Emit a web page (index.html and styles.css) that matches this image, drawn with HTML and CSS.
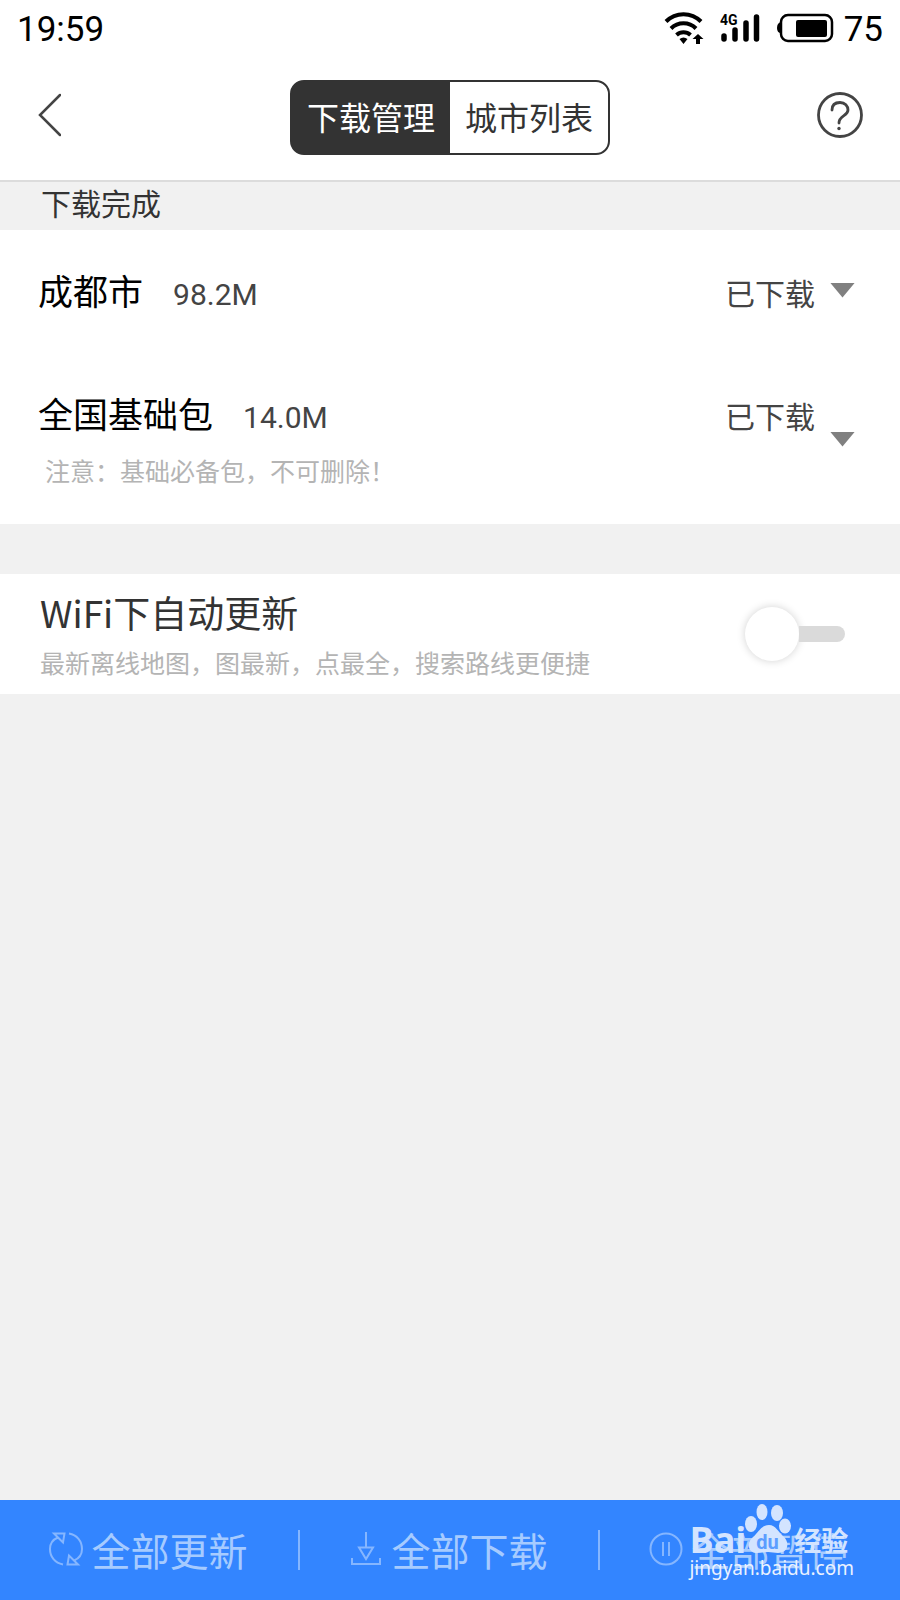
FILE: index.html
```html
<!DOCTYPE html>
<html lang="zh-CN">
<head>
<meta charset="utf-8">
<meta name="viewport" content="width=device-width, initial-scale=1">
<title>下载管理</title>
<link rel="stylesheet" href="styles.css">
</head>
<body>
<div class="screen">
  <div class="status">
    <span class="status-text">19:59</span>
    <div class="status-icons">
      <svg class="wifi" viewBox="0 0 40 34" width="40" height="34" aria-hidden="true">
        <g fill="none" stroke="#000" stroke-width="4">
          <path d="M2 10.500A24.500 24.500 0 0 1 37 10.500"/>
          <path d="M7 17.500A17.500 17.500 0 0 1 32 17.500"/>
          <path d="M12.500 24A10.500 10.500 0 0 1 26.500 24"/>
        </g>
        <path d="M15.500 28Q19.500 25 23.500 28L19.500 33ZM34 23L39.500 28H36V33H32V28H28.500Z"/>
      </svg>
      <svg class="signal" viewBox="0 0 40 32" width="40" height="32" aria-hidden="true">
        <g stroke="#000" stroke-width="5.500" stroke-linecap="round">
          <path d="M4 24V27M15 18V27M26 11V27M36.500 5V27"/>
        </g>
        <text x="0" y="13" class="net">4G</text>
      </svg>
      <svg class="battery" viewBox="0 0 58 30" width="58" height="30" aria-hidden="true">
        <path d="M5 9Q1 10 1 15T5 20Z"/>
        <rect x="5" y="2" width="51" height="26" rx="7" fill="none" stroke="#000" stroke-width="2.500"/>
        <rect x="20" y="7" width="31" height="17" rx="2"/>
      </svg>
      <span class="status-text">75</span>
    </div>
  </div>

  <header class="header">
    <button class="icon-button" type="button" aria-label="返回">
      <svg viewBox="0 0 24 44" width="24" height="44"><path d="M23 2L3 22L23 42" fill="none" stroke="#444" stroke-width="2.500" stroke-linecap="round"/></svg>
    </button>
    <div class="tabs">
      <button class="tab tab-active" type="button">下载管理</button>
      <button class="tab" type="button">城市列表</button>
    </div>
    <button class="icon-button" type="button" aria-label="帮助">
      <svg viewBox="0 0 46 46" width="46" height="46"><g fill="none" stroke="#444" stroke-width="2.800" stroke-linecap="round"><circle cx="23" cy="23" r="21.500"/><path d="M15 18C15 13 18 10.500 23 10.500C28 10.500 31 14 31 18C31 24 22 23.500 22 31"/></g><circle cx="22" cy="36.500" r="1.700" fill="#444"/></svg>
    </button>
  </header>

  <main class="content">
    <h2 class="section-title">下载完成</h2>
    <ul class="list">
      <li class="item">
        <div class="item-body">
          <div class="item-line">
            <span class="name">成都市</span><span class="size">98.2M</span><span class="state">已下载</span>
          </div>
        </div>
        <button class="expand" type="button" aria-label="展开"></button>
      </li>
      <li class="item item-noted">
        <div class="item-body">
          <div class="item-line">
            <span class="name">全国基础包</span><span class="size">14.0M</span><span class="state">已下载</span>
          </div>
          <p class="note">注意：基础必备包，不可删除！</p>
        </div>
        <button class="expand" type="button" aria-label="展开"></button>
      </li>
    </ul>
    <div class="setting">
      <label class="setting-text" for="auto-update">
        <span class="setting-title">WiFi下自动更新</span>
        <span class="setting-hint">最新离线地图，图最新，点最全，搜索路线更便捷</span>
      </label>
      <input class="switch" id="auto-update" type="checkbox">
    </div>
  </main>

  <footer class="footer">
    <button class="action" type="button">
      <svg viewBox="0 0 34 34" width="34" height="34"><g fill="none" stroke="currentColor" stroke-width="2"><path id="half" d="M14 32.500C6 31 1 25 1 17C1 12 4 7.500 9 5.500M5 1.500H15.500L14 10.500L9 5.500Z"/><use href="#half" transform="rotate(180 17 17)"/></g></svg>
      <span>全部更新</span>
    </button>
    <button class="action" type="button">
      <svg viewBox="0 0 34 34" width="34" height="34"><g fill="none" stroke="currentColor" stroke-width="2"><path d="M17 0V15M10 15.500H24L17 27ZM3 26V32H31V26"/></g></svg>
      <span>全部下载</span>
    </button>
    <button class="action" type="button">
      <svg viewBox="0 0 34 34" width="34" height="34"><g fill="none" stroke="currentColor" stroke-width="2"><circle cx="17" cy="17" r="15.500"/><path d="M14 10V24M20 10V24"/></g></svg>
      <span>全部暂停</span>
    </button>
    <div class="watermark">
      <div class="brand">
        <span class="brand-bai">Bai</span>
        <span class="paw">
          <svg viewBox="0 0 48 50" width="48" height="50" aria-hidden="true"><g fill="currentColor"><ellipse cx="7" cy="20" rx="6" ry="8"/><ellipse cx="18" cy="8" rx="5.500" ry="8"/><ellipse cx="33" cy="9" rx="6" ry="8"/><ellipse cx="41" cy="22" rx="6" ry="7.500"/><path d="M25 21C32 21 34 28 40 33C46 39 44 49 34 49C30 49 28 48 24 48C20 48 17 49 13 49C4 49 2 39 9 33C15 28 17 21 25 21Z"/></g></svg>
          <span class="brand-du">du</span>
        </span>
        <span class="brand-cn">经验</span>
      </div>
      <span class="site">jingyan.baidu.com</span>
    </div>
  </footer>
</div>
</body>
</html>
```
FILE: styles.css
```css
* { box-sizing: border-box; }
body {
  margin: 0;
  background: #f1f1f1;
  color: #333;
  font-family: "Noto Sans CJK SC", sans-serif;
}
button {
  margin: 0;
  padding: 0;
  border: 0;
  background: none;
  color: inherit;
  font: inherit;
}
svg { display: block; }
.screen { display: flex; flex-direction: column; min-height: 100vh; }

.status {
  display: flex;
  justify-content: space-between;
  align-items: center;
  height: 56px;
  padding: 0 17px;
  background: #fff;
  color: #000;
}
.status-text { padding-top: 4px; font-family: Roboto, sans-serif; font-size: 35px; line-height: 44px; }
.status-icons { display: flex; align-items: center; }
.signal { margin-left: 16px; }
.battery { margin: 0 10px 0 16px; }
.net { font: bold 14px Roboto, sans-serif; }

.header {
  display: flex;
  justify-content: space-between;
  align-items: center;
  height: 126px;
  padding: 0 37px 2px;
  border-bottom: 2px solid #dcdcdc;
  background: #fff;
}
.icon-button { display: flex; width: 46px; padding-bottom: 4px; }
.tabs {
  display: flex;
  height: 75px;
  border: 2px solid #333;
  border-radius: 14px;
  background: linear-gradient(90deg, #333 50%, #fff 50%) border-box;
}
.tab { width: 158px; padding-bottom: 2px; font-size: 32px; }
.tab-active { color: #fff; }

.content { flex: 1; }
.section-title {
  height: 48px;
  margin: 0;
  padding-left: 41px;
  font-size: 30px;
  font-weight: 400;
  line-height: 40px;
}
.list { margin: 0 0 50px; padding: 0; list-style: none; background: #fff; }
.item { display: flex; align-items: center; padding: 35px 45px 38px 38px; }
.item-noted { padding-bottom: 34px; }
.item-body { flex: 1; }
.item-line { display: flex; align-items: baseline; height: 50px; line-height: 50px; }
.name { color: #000; font-size: 35px; }
.size { margin-left: 30px; color: #444; font-family: Roboto, sans-serif; font-size: 30px; line-height: 30px; }
.state { margin-left: auto; color: #444; font-size: 30px; }
.note { margin: 0; padding: 12px 0 0 7px; color: #b4b4b4; font-size: 25px; line-height: 40px; }
.expand {
  width: 25px;
  height: 15px;
  margin-left: 15px;
  background: #808080;
  clip-path: polygon(0 0, 100% 0, 50% 100%);
}

.setting {
  display: flex;
  justify-content: space-between;
  align-items: center;
  height: 120px;
  padding: 0 55px 0 40px;
  background: #fff;
}
.setting-text { display: flex; flex-direction: column; padding-top: 2px; }
.setting-title { font-size: 37px; line-height: 54px; }
.setting-hint { color: #b4b4b4; font-size: 25px; line-height: 46px; }
.switch {
  display: flex;
  align-items: center;
  width: 100px;
  height: 54px;
  margin: 0;
  appearance: none;
}
.switch::before {
  content: "";
  width: 54px;
  height: 54px;
  border-radius: 50%;
  background: #fff;
  box-shadow: 0 0 8px rgba(0, 0, 0, 0.18);
}
.switch::after {
  content: "";
  flex: 1;
  height: 16px;
  border-radius: 0 8px 8px 0;
  background: #dadada;
}
.switch:checked::before { order: 1; }
.switch:checked::after { border-radius: 8px 0 0 8px; background: #3385ff; }

.footer {
  position: relative;
  display: flex;
  height: 100px;
  background: #3385ff;
  color: #a6cbff;
}
.action {
  display: flex;
  flex: 1;
  justify-content: center;
  align-items: center;
  gap: 8px;
  padding: 0 3px 2px 0;
  background: linear-gradient(#85b6ff, #85b6ff) right center / 2px 40px no-repeat;
  font-size: 39px;
}
.action:last-of-type { background: none; }
.action svg { color: #85b6ff; }
.watermark {
  position: absolute;
  right: 46px;
  bottom: 18px;
  display: flex;
  flex-direction: column;
  color: #d3e4ff;
  pointer-events: none;
}
.brand { display: flex; align-items: flex-end; height: 50px; font-weight: 700; }
.brand-bai { font-family: "Open Sans", sans-serif; font-size: 36px; line-height: 28px; }
.paw { position: relative; margin-left: -2px; }
.brand-du { position: absolute; left: 12px; bottom: 0; color: #5c9dff; font-family: Roboto, sans-serif; font-size: 20px; line-height: 24px; }
.brand-cn { margin-left: 2px; font-size: 27px; line-height: 28px; }
.site { color: #eaf2ff; font: 19px/28px "Noto Sans", sans-serif; }
```
